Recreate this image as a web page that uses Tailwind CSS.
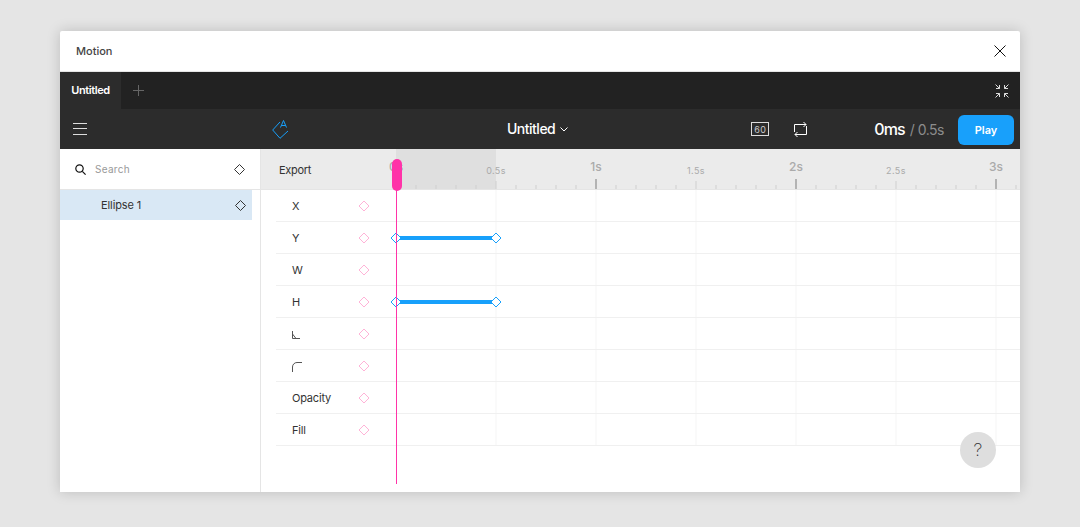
<!DOCTYPE html>
<html lang="en">

<head>
  <meta charset="UTF-8" />
  <title>Motion</title>
  <script src="https://cdn.jsdelivr.net/npm/@tailwindcss/browser@4"></script>
</head>

<body class="h-[527px] overflow-hidden bg-[#e5e5e5] pt-[31px] font-['Inter',sans-serif]">
  <div class="relative mx-auto flex h-[461px] w-[960px] flex-col overflow-hidden rounded-t-[2px] bg-white shadow-[0_0_14px_rgba(0,0,0,0.18)]">

    <!-- title bar -->
    <div class="flex h-[41px] items-center justify-between border-b border-[#e5e5e5] pl-4 pr-[14px]">
      <span class="text-[11px] font-medium text-[#444]">Motion</span>
      <svg class="h-3 w-3" viewBox="0 0 12 12" fill="none" stroke="#111" stroke-width="1"><path d="M.5.5l11 11M11.5.5l-11 11" /></svg>
    </div>

    <!-- tabs -->
    <div class="flex h-[37px] items-center bg-[#222222]">
      <div class="flex h-full w-[61px] items-center justify-center bg-[#2c2c2c] text-[11px] font-semibold tracking-[-0.4px] text-white">Untitled</div>
      <svg class="ml-[12px] h-[11px] w-[11px]" viewBox="0 0 11 11" stroke="#666" stroke-width="1"><path d="M5.5 0v11M0 5.5h11" /></svg>
      <svg class="ml-auto mr-[11px] h-[14px] w-[14px]" viewBox="0 0 14 14" fill="none" stroke="#ddd" stroke-width="1"><path d="M.5.5l4 4M1 4.500h3.500V1M13.500.5l-4 4M13 4.500H9.500V1M.5 13.500l4-4M1 9.500h3.500V13M13.500 13.500l-4-4M13 9.500H9.500V13" /></svg>
    </div>

    <!-- toolbar -->
    <div class="flex h-10 items-center bg-[#2c2c2c]">
      <svg class="ml-[13px] h-[12px] w-[14px]" viewBox="0 0 14 12" stroke="#ddd" stroke-width="1"><path d="M0 .5h14M0 5.500h14M0 11.500h14" /></svg>
      <svg class="ml-[185px] h-[19px] w-[17px]" viewBox="0 0 17 19" fill="none" stroke="#18a0fb" stroke-width="1"><path d="M8 2L.7 10 8 18.300 16 11" /><path d="M8.500 7.500L11.500.5l3 7M9.500 5.500h4" /></svg>
      <div class="ml-[218px] flex items-center gap-[5px] text-sm font-medium tracking-[-0.5px] text-white">
        Untitled
        <svg class="h-[5px] w-2" viewBox="0 0 8 5" fill="none" stroke="#fff" stroke-width="1"><path d="M.5.5L4 4 7.500.5" /></svg>
      </div>
      <div class="ml-[183px] flex h-[14px] w-[18px] items-center justify-center border border-[#ddd] text-[9px] leading-none tracking-[0.3px] text-[#ccc]">60</div>
      <svg class="ml-[25px] h-[16px] w-[13px]" viewBox="0 0 13 16" fill="none" stroke="#fff" stroke-width="1"><path d="M.5 11V3.500H12M9.500 1L12 3.500 9.500 6M12.500 5v8.500H1M3.500 11L1 13.500 3.500 16" /></svg>
      <div class="ml-auto flex items-baseline">
        <span class="text-base font-medium tracking-[-0.9px] text-white">0ms</span>
        <span class="ml-[5px] text-sm tracking-[-0.5px] text-[#8c8c8c]">/ 0.5s</span>
      </div>
      <button class="ml-[14px] mr-[6px] mt-[2px] h-[30px] w-14 rounded-md bg-[#18a0fb] text-[11px] font-semibold text-white">Play</button>
    </div>

    <div class="flex min-h-0 flex-1">
      <!-- layers -->
      <aside class="w-[201px] shrink-0 border-r border-[#e5e5e5]">
        <div class="flex h-[41px] items-center border-b border-[#e5e5e5] pl-[15px] pr-[15px]">
          <svg class="h-[11px] w-[11px]" viewBox="0 0 11 11" fill="none" stroke="#111" stroke-width="1.200"><circle cx="4.500" cy="4.500" r="3.700" /><path d="M7.300 7.300L10.600 10.600" /></svg>
          <span class="ml-[9px] text-[10px] tracking-[0.3px] text-[#999]">Search</span>
          <svg class="ml-auto h-[11px] w-[11px]" viewBox="0 0 11 11" fill="white" stroke="#333" stroke-width="1"><path d="M5.500.5l5 5-5 5-5-5z" /></svg>
        </div>
        <div class="flex h-[30px] w-[192px] items-center justify-between bg-[#d9e8f5] pl-[41px] pr-[6px] text-[11px] tracking-[-0.1px] text-[#333]">
          Ellipse 1
          <svg class="h-[11px] w-[11px]" viewBox="0 0 11 11" fill="none" stroke="#333" stroke-width="1"><path d="M5.500.5l5 5-5 5-5-5z" /></svg>
        </div>
      </aside>

      <!-- timeline -->
      <div class="relative min-w-0 flex-1">
        <div class="relative h-[41px] border-b border-[#e5e5e5] bg-[#ebebeb]">
          <span class="absolute left-[18px] top-[14px] text-[11px] leading-[14px] tracking-[-0.3px] text-[#333]">Export</span>
          <div class="absolute left-[135px] top-0 h-[40px] w-[100px] bg-[#dfdfdf]"></div>
          <svg class="absolute left-0 top-0 h-[40px] w-[759px]" viewBox="0 0 759 40" stroke="#cfcfcf" fill="none">
            <path d="M155 36v4M175 36v4M195 36v4M215 36v4M255 36v4M275 36v4M295 36v4M315 36v4M355 36v4M375 36v4M395 36v4M415 36v4M455 36v4M475 36v4M495 36v4M515 36v4M555 36v4M575 36v4M595 36v4M615 36v4M655 36v4M675 36v4M695 36v4M715 36v4M755 36v4" />
            <path d="M235 32v8M435 32v8M635 32v8" />
            <path stroke="#b3b3b3" stroke-width="2" d="M335 30v10M535 30v10M735 30v10" />
          </svg>
          <span class="absolute left-[235px] top-[16px] -translate-x-1/2 text-[9px] leading-[12px] tracking-[0.4px] text-[#aaa]">0.5s</span>
          <span class="absolute left-[335px] top-[11px] -translate-x-1/2 text-[12px] font-medium leading-[14px] text-[#aaa]">1s</span>
          <span class="absolute left-[435px] top-[16px] -translate-x-1/2 text-[9px] leading-[12px] tracking-[0.4px] text-[#aaa]">1.5s</span>
          <span class="absolute left-[535px] top-[11px] -translate-x-1/2 text-[12px] font-medium leading-[14px] text-[#aaa]">2s</span>
          <span class="absolute left-[635px] top-[16px] -translate-x-1/2 text-[9px] leading-[12px] tracking-[0.4px] text-[#aaa]">2.5s</span>
          <span class="absolute left-[735px] top-[11px] -translate-x-1/2 text-[12px] font-medium leading-[14px] text-[#aaa]">3s</span>
          <span class="absolute left-[135px] top-[11px] -translate-x-1/2 text-[12px] font-medium leading-[14px] text-[#aaa]">0s</span>
        </div>

        <!-- property rows -->
        <div class="relative ml-[15px]">
          <svg class="absolute left-0 top-0 h-[256px] w-[744px]" viewBox="0 0 744 256" stroke="#f5f5f5" fill="none"><path d="M220 0v256M320 0v256M420 0v256M520 0v256M620 0v256M720 0v256" /></svg>

          <div class="relative flex h-8 items-center border-b border-[#f0f0f0] pl-4 pt-[2px] text-[11px] tracking-[-0.2px] text-[#333]"><span class="w-[66px]">X</span><svg class="mb-px h-3 w-3" viewBox="0 0 12 12" fill="none" stroke="#ffb3d7"><path d="M6 1l5 5-5 5-5-5z" /></svg></div>

          <div class="relative flex h-8 items-center border-b border-[#f0f0f0] pl-4 pt-[2px] text-[11px] tracking-[-0.2px] text-[#333]"><span class="w-[66px]">Y</span><svg class="mb-px h-3 w-3" viewBox="0 0 12 12" fill="none" stroke="#ffb3d7"><path d="M6 1l5 5-5 5-5-5z" /></svg>
            <div class="absolute left-[120px] top-[14px] h-[4px] w-[100px] bg-[#18a0fb]"></div>
            <svg class="absolute left-[114px] top-[10px] h-3 w-3" viewBox="0 0 12 12" fill="white" stroke="#18a0fb"><path d="M6 1l5 5-5 5-5-5z" /></svg>
            <svg class="absolute left-[214px] top-[10px] h-3 w-3" viewBox="0 0 12 12" fill="white" stroke="#18a0fb"><path d="M6 1l5 5-5 5-5-5z" /></svg>
          </div>

          <div class="relative flex h-8 items-center border-b border-[#f0f0f0] pl-4 pt-[2px] text-[11px] tracking-[-0.2px] text-[#333]"><span class="w-[66px]">W</span><svg class="mb-px h-3 w-3" viewBox="0 0 12 12" fill="none" stroke="#ffb3d7"><path d="M6 1l5 5-5 5-5-5z" /></svg></div>

          <div class="relative flex h-8 items-center border-b border-[#f0f0f0] pl-4 pt-[2px] text-[11px] tracking-[-0.2px] text-[#333]"><span class="w-[66px]">H</span><svg class="mb-px h-3 w-3" viewBox="0 0 12 12" fill="none" stroke="#ffb3d7"><path d="M6 1l5 5-5 5-5-5z" /></svg>
            <div class="absolute left-[120px] top-[14px] h-[4px] w-[100px] bg-[#18a0fb]"></div>
            <svg class="absolute left-[114px] top-[10px] h-3 w-3" viewBox="0 0 12 12" fill="white" stroke="#18a0fb"><path d="M6 1l5 5-5 5-5-5z" /></svg>
            <svg class="absolute left-[214px] top-[10px] h-3 w-3" viewBox="0 0 12 12" fill="white" stroke="#18a0fb"><path d="M6 1l5 5-5 5-5-5z" /></svg>
          </div>

          <div class="relative flex h-8 items-center border-b border-[#f0f0f0] pl-4 pt-[2px] text-[11px] tracking-[-0.2px] text-[#333]"><span class="w-[66px]"><svg class="h-[8px] w-[8px]" viewBox="0 0 8 8" fill="none" stroke="#555"><path d="M.5 0v7.500H8M.5 3L4 7.500" /></svg></span><svg class="mb-px h-3 w-3" viewBox="0 0 12 12" fill="none" stroke="#ffb3d7"><path d="M6 1l5 5-5 5-5-5z" /></svg></div>

          <div class="relative flex h-8 items-center border-b border-[#f0f0f0] pl-4 pt-[2px] text-[11px] tracking-[-0.2px] text-[#333]"><span class="w-[66px]"><svg class="h-[10px] w-[10px]" viewBox="0 0 10 10" fill="none" stroke="#555"><path d="M.5 10V5A4.500 4.500 0 0 1 5 .5h5" /></svg></span><svg class="mb-px h-3 w-3" viewBox="0 0 12 12" fill="none" stroke="#ffb3d7"><path d="M6 1l5 5-5 5-5-5z" /></svg></div>

          <div class="relative flex h-8 items-center border-b border-[#f0f0f0] pl-4 pt-[2px] text-[11px] tracking-[-0.2px] text-[#333]"><span class="w-[66px]">Opacity</span><svg class="mb-px h-3 w-3" viewBox="0 0 12 12" fill="none" stroke="#ffb3d7"><path d="M6 1l5 5-5 5-5-5z" /></svg></div>

          <div class="relative flex h-8 items-center border-b border-[#f0f0f0] pl-4 pt-[2px] text-[11px] tracking-[-0.2px] text-[#333]"><span class="w-[66px]">Fill</span><svg class="mb-px h-3 w-3" viewBox="0 0 12 12" fill="none" stroke="#ffb3d7"><path d="M6 1l5 5-5 5-5-5z" /></svg></div>
        </div>

        <!-- playhead -->
        <div class="absolute left-[135px] top-[41px] h-[294px] w-px bg-[#ff33a8]"></div>
        <div class="absolute left-[131px] top-[10px] h-8 w-[10px] rounded-[5px] bg-[#ff33a8]"></div>

        <!-- help -->
        <div class="absolute left-[699px] top-[283px] flex h-9 w-9 items-center justify-center rounded-full bg-[#dedede] text-lg font-extralight text-[#333]">?</div>
      </div>
    </div>
  </div>
</body>

</html>
